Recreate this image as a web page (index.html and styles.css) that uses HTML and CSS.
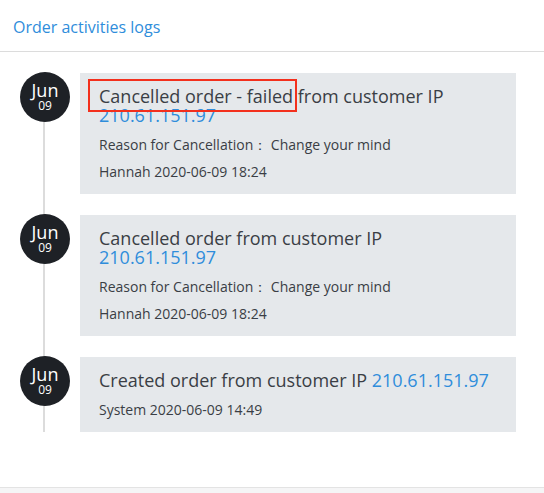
FILE: index.html
```html
<!DOCTYPE html>
<html lang="en">
<head>
<meta charset="utf-8">
<title>Order activities logs</title>
<link rel="stylesheet" href="styles.css">
</head>
<body>
<div class="panel">
  <div class="panel-header">Order activities logs</div>
  <div class="timeline">
    <div class="entry">
      <div class="date"><span class="month">Jun</span><span class="day">09</span></div>
      <div class="card">
        <div class="title">Cancelled order - failed from customer IP <span class="ip">210.61.151.97</span></div>
        <div class="meta first">Reason for Cancellation： Change your mind</div>
        <div class="meta">Hannah 2020-06-09 18:24</div>
        <div class="highlight"></div>
      </div>
    </div>
    <div class="entry">
      <div class="date"><span class="month">Jun</span><span class="day">09</span></div>
      <div class="card">
        <div class="title">Cancelled order from customer IP <span class="ip">210.61.151.97</span></div>
        <div class="meta first">Reason for Cancellation： Change your mind</div>
        <div class="meta">Hannah 2020-06-09 18:24</div>
      </div>
    </div>
    <div class="entry last">
      <div class="date"><span class="month">Jun</span><span class="day">09</span></div>
      <div class="card">
        <div class="title">Created order from customer IP <span class="ip">210.61.151.97</span></div>
        <div class="meta first">System 2020-06-09 14:49</div>
      </div>
    </div>
  </div>
</div>
</body>
</html>
```
FILE: styles.css
```css
html, body {
  margin: 0;
  padding: 0;
}
body {
  background: #f5f5f6;
  font-family: "Open Sans", "Noto Sans", sans-serif;
  color: #3a3e45;
}
.panel {
  background: #fff;
  border-bottom: 1px solid #e3e3e3;
  height: 488px;
  box-sizing: border-box;
}
.panel-header {
  height: 52px;
  box-sizing: border-box;
  border-bottom: 1px solid #dcdcdc;
  padding: 16px 0 0 13px;
  font-size: 16px;
  line-height: 22px;
  color: #2f8ddb;
}
.timeline {
  padding: 21px 28px 0 20px;
}
.entry {
  position: relative;
  display: flex;
  gap: 10px;
  align-items: flex-start;
  padding-bottom: 21px;
}
.entry.last {
  padding-bottom: 0;
}
.entry::before {
  content: "";
  position: absolute;
  left: 23px;
  top: 0;
  bottom: 0;
  width: 2px;
  background: #dcdcdc;
}
.date {
  position: relative;
  z-index: 1;
  flex: 0 0 50px;
  width: 50px;
  height: 50px;
  margin-top: -1px;
  border-radius: 50%;
  background: #1e2126;
  color: #fff;
  display: flex;
  flex-direction: column;
  align-items: center;
  justify-content: center;
}
.month {
  font-size: 18px;
  line-height: 17px;
  margin-top: 0;
}
.day {
  font-size: 12px;
  line-height: 12px;
  margin-top: 1px;
}
.card {
  position: relative;
  flex: 1;
  background: #e5e8eb;
  padding: 14px 19px 12px 19px;
}
.title {
  font-size: 18px;
  line-height: 19px;
}
.ip {
  color: #2f8ddb;
}
.meta {
  font-size: 14px;
  line-height: 20px;
  margin-top: 7px;
}
.meta.first {
  margin-top: 10px;
}
.highlight {
  position: absolute;
  left: 8px;
  top: 6px;
  width: 205px;
  height: 29px;
  border: 2px solid #f3301d;
}
```
